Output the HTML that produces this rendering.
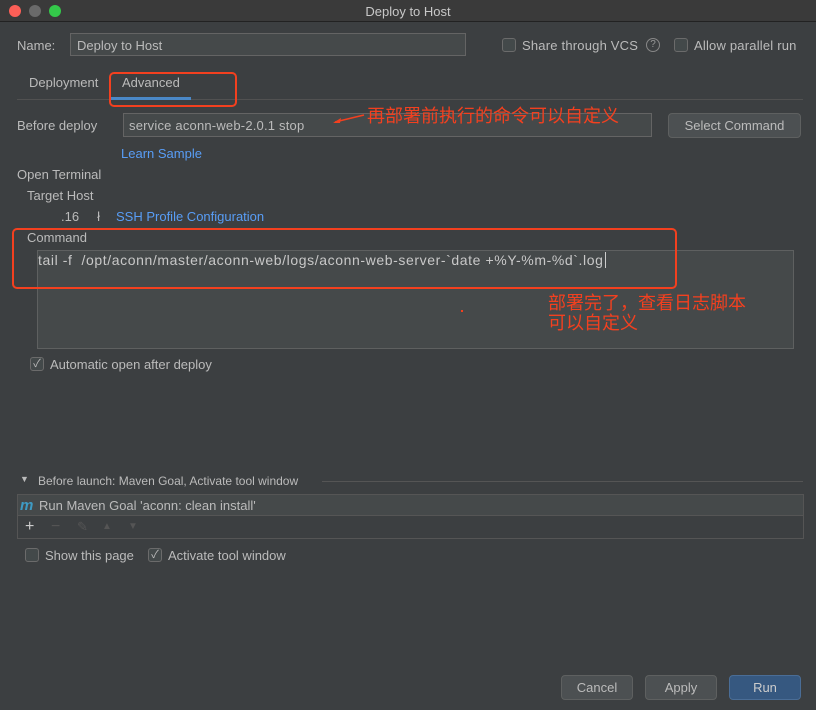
<!DOCTYPE html>
<html><head><meta charset="utf-8"><style>
*{box-sizing:border-box;margin:0;padding:0}
body{width:816px;height:710px;background:#3c3f41;font-family:"Liberation Sans","Noto Sans CJK SC",sans-serif;font-size:13px;color:#bbbbbb;position:relative;overflow:hidden}
.a{position:absolute;white-space:nowrap}
.cb{position:absolute;width:14px;height:14px;border:1px solid #6b6b6b;border-radius:3px;background:#43494a}
.fld{position:absolute;background:#45494a;border:1px solid #646464}
.btn{position:absolute;border:1px solid #5e6060;border-radius:4px;background:#4c5052;text-align:center;line-height:23px;font-size:13px;color:#bbb}
.red{position:absolute;border:2px solid #f3401f;border-radius:5px}
.cn{color:#f3401f;font-size:18px}
.blue{color:#589df6}
</style></head><body>
<div class="a" style="left:0;top:0;width:816px;height:22px;background:#3a3a3a;border-bottom:1px solid #222"></div>
<div class="a" style="left:9px;top:5px;width:12px;height:12px;border-radius:6px;background:#fc5f57"></div>
<div class="a" style="left:29px;top:5px;width:12px;height:12px;border-radius:6px;background:#6a6a6a"></div>
<div class="a" style="left:49px;top:5px;width:12px;height:12px;border-radius:6px;background:#34c84a"></div>
<div class="a" style="left:0;width:816px;top:4px;text-align:center;color:#c8c8c8">Deploy to Host</div>

<div class="a" style="left:17px;top:38px">Name:</div>
<div class="fld" style="left:70px;top:33px;width:396px;height:23px"></div>
<div class="a" style="left:77px;top:38px">Deploy to Host</div>
<div class="cb" style="left:502px;top:38px"></div>
<div class="a" style="left:522px;top:38px;letter-spacing:0.2px">Share through VCS</div>
<div class="a" style="left:646px;top:38px;width:14px;height:14px;border:1px solid #888;border-radius:7px;font-size:10px;line-height:12px;text-align:center;color:#999">?</div>
<div class="cb" style="left:674px;top:38px"></div>
<div class="a" style="left:694px;top:38px;letter-spacing:0.2px">Allow parallel run</div>

<div class="a" style="left:29px;top:75px;font-size:13px">Deployment</div>
<div class="a" style="left:122px;top:75px;font-size:13px">Advanced</div>
<div class="a" style="left:17px;top:99px;width:786px;height:1px;background:#515151"></div>
<div class="a" style="left:111px;top:97px;width:80px;height:3px;background:#4a88c7"></div>
<div class="red" style="left:109px;top:72px;width:128px;height:35px"></div>

<div class="a" style="left:17px;top:118px">Before deploy</div>
<div class="fld" style="left:123px;top:113px;width:529px;height:24px"></div>
<div class="a" style="left:129px;top:118px;letter-spacing:0.2px">service aconn-web-2.0.1 stop</div>
<div class="btn" style="left:668px;top:113px;width:133px;height:25px">Select Command</div>
<div class="a cn" style="left:367px;top:102px">再部署前执行的命令可以自定义</div>
<svg class="a" style="left:330px;top:110px" width="35" height="16"><path d="M34 5 L5 12" stroke="#f3401f" stroke-width="1.5"/><path d="M3 13 L11 8 L10 13 Z" fill="#f3401f"/></svg>
<div class="a blue" style="left:121px;top:146px">Learn Sample</div>
<div class="a" style="left:17px;top:167px">Open Terminal</div>
<div class="a" style="left:27px;top:188px">Target Host</div>
<div class="a" style="left:61px;top:209px">.16&nbsp;&nbsp;&nbsp;&nbsp;&nbsp;ł</div>
<div class="a blue" style="left:116px;top:209px">SSH Profile Configuration</div>

<div class="a" style="left:27px;top:230px">Command</div>
<div class="a" style="left:37px;top:250px;width:757px;height:99px;background:#45494a;border:1px solid #5e6060"></div>
<div class="a" style="left:38px;top:252px;color:#c8c8c8;font-size:14px;letter-spacing:0.6px">tail -f&nbsp; /opt/aconn/master/aconn-web/logs/aconn-web-server-`date +%Y-%m-%d`.log<span style="border-left:1px solid #ccc;margin-left:1px"></span></div>
<div class="red" style="left:12px;top:228px;width:665px;height:61px"></div>
<div class="a cn" style="left:548px;top:293px;line-height:20px">部署完了，查看日志脚本<br>可以自定义</div>
<div class="a" style="left:461px;top:310px;width:2px;height:2px;background:#f3401f"></div>

<div class="cb" style="left:30px;top:357px;font-size:11px;line-height:12px;text-align:center">✓</div>
<div class="a" style="left:50px;top:357px">Automatic open after deploy</div>

<div class="a" style="left:20px;top:474px;font-size:9px">▼</div>
<div class="a" style="left:38px;top:474px;font-size:12px">Before launch: Maven Goal, Activate tool window</div>
<div class="a" style="left:322px;top:481px;width:481px;height:1px;background:#555"></div>
<div class="a" style="left:17px;top:494px;width:787px;height:45px;border:1px solid #555;background:#3c3f41"></div>
<div class="a" style="left:18px;top:495px;width:785px;height:21px;background:#45494a;border-bottom:1px solid #555"></div>
<div class="a" style="left:20px;top:497px;color:#3e9bc4;font-style:italic;font-weight:bold;font-size:15px">m</div>
<div class="a" style="left:39px;top:498px">Run Maven Goal 'aconn: clean install'</div>
<div class="a" style="left:25px;top:518px;font-size:16px;color:#ccc">+</div>
<div class="a" style="left:51px;top:518px;font-size:16px;color:#555">−</div>
<div class="a" style="left:77px;top:519px;font-size:13px;color:#555">✎</div>
<div class="a" style="left:102px;top:521px;font-size:10px;color:#555">▲</div>
<div class="a" style="left:128px;top:521px;font-size:10px;color:#555">▼</div>

<div class="cb" style="left:25px;top:548px"></div>
<div class="a" style="left:45px;top:548px">Show this page</div>
<div class="cb" style="left:148px;top:548px;font-size:11px;line-height:12px;text-align:center">✓</div>
<div class="a" style="left:168px;top:548px">Activate tool window</div>

<div class="btn" style="left:561px;top:675px;width:72px;height:25px">Cancel</div>
<div class="btn" style="left:645px;top:675px;width:72px;height:25px">Apply</div>
<div class="btn" style="left:729px;top:675px;width:72px;height:25px;background:#365880;border-color:#4a6d96;color:#ccc">Run</div>
</body></html>
